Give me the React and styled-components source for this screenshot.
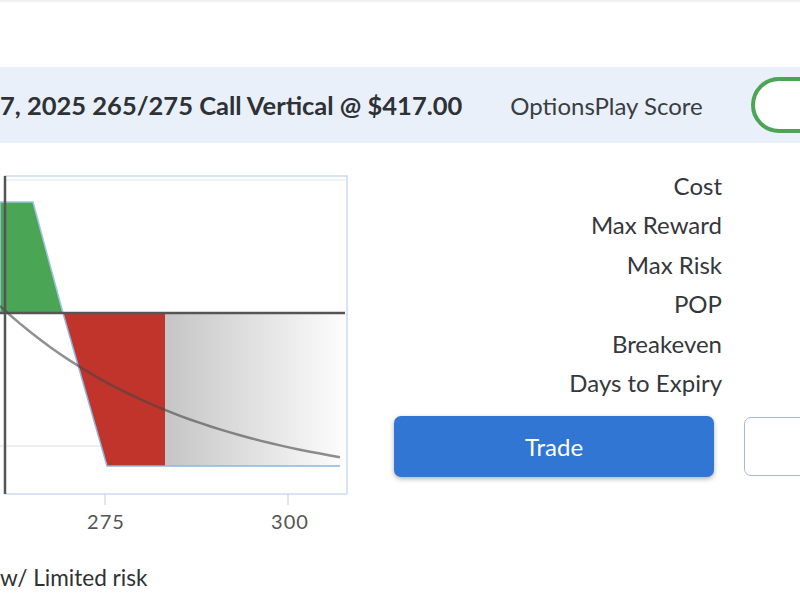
import React from 'react';
import styled, { createGlobalStyle } from 'styled-components';

const GlobalStyle = createGlobalStyle`
  html, body {
    margin: 0;
    padding: 0;
    background: #fff;
    overflow: hidden;
  }
  body {
    font-family: Lato, 'Open Sans', sans-serif;
    color: #2f3236;
  }
`;

const Page = styled.div`
  width: 800px;
  height: 600px;
  overflow: hidden;
`;

const TopEdge = styled.div`
  height: 3px;
  background: linear-gradient(#ededed, #fafafa);
`;

const Header = styled.div`
  margin-top: 64px;
  height: 76px;
  background: #e9f0fa;
  display: flex;
  align-items: center;
  gap: 48px;
  white-space: nowrap;
`;

const Title = styled.div`
  font-size: 25.5px;
  font-weight: 700;
  color: #2e3135;
`;

const ScoreLabel = styled.div`
  font-size: 24px;
  color: #3a3d42;
`;

const ScorePill = styled.div`
  flex-shrink: 0;
  width: 220px;
  height: 48px;
  border: 4px solid #4ba555;
  border-radius: 30px;
  background: #fff;
`;

const Body = styled.div`
  display: flex;
  align-items: flex-start;
`;

const ChartColumn = styled.div`
  width: 394px;
  flex-shrink: 0;
  padding-top: 27px;
`;

const Chart = styled.svg`
  display: block;
`;

const RiskNote = styled.div`
  margin-top: 24px;
  font-size: 22.6px;
  color: #2e3135;
`;

const Stats = styled.div`
  padding-top: 23px;
  flex-shrink: 0;
`;

const StatGrid = styled.div`
  display: grid;
  grid-template-columns: 328px 200px;
  font-size: 24px;
  line-height: 39.4px;
  color: #34373b;
`;

const StatLabel = styled.div`
  text-align: right;
`;

const StatValue = styled.div`
  padding-left: 24px;
`;

const Actions = styled.div`
  display: flex;
  align-items: center;
  gap: 30px;
  margin-top: 14px;
`;

const TradeButton = styled.button`
  width: 320px;
  height: 61px;
  border: none;
  border-radius: 7px;
  background: #3176d2;
  color: #fff;
  font-family: Lato, sans-serif;
  font-size: 24px;
  box-shadow: 0 2px 5px rgba(0, 0, 0, 0.3);
  flex-shrink: 0;
`;

const GhostButton = styled.button`
  width: 320px;
  height: 59px;
  border: 1.5px solid #aab6dc;
  border-radius: 7px;
  background: #fff;
  flex-shrink: 0;
`;

const stats = ['Cost', 'Max Reward', 'Max Risk', 'POP', 'Breakeven', 'Days to Expiry'];

// probability curve, page coords shifted by the chart's top (170)
const curve = () => {
  const pts = [];
  for (let x = 0; x <= 340; x += 10) {
    const y = 306 + 185 * (1 - Math.exp(-x / 200)) - 170;
    pts.push(`${x},${y.toFixed(1)}`);
  }
  return pts.join(' ');
};

const PayoffChart = () => (
  <Chart width="360" height="370" viewBox="0 0 360 370">
    <defs>
      <linearGradient id="loss" x1="0" x2="1" y1="0" y2="0">
        <stop offset="0" stopColor="#c5c5c5" />
        <stop offset="1" stopColor="#fdfdfd" />
      </linearGradient>
    </defs>
    <rect x="5" y="6" width="342" height="318" fill="#fff" stroke="#c9dcef" strokeWidth="1.5" />
    <line x1="5" y1="10" x2="345" y2="10" stroke="#e4e4e4" strokeWidth="1" />
    <line x1="0" y1="276" x2="345" y2="276" stroke="#dedede" strokeWidth="1" />
    <polygon points="0,32 33,32 63,143 0,143" fill="#4aa654" stroke="#9fc3e3" strokeWidth="1.5" />
    <rect x="165" y="143" width="180" height="153" fill="url(#loss)" />
    <polygon points="63,143 165,143 165,296 107,296" fill="#c0342b" />
    <polyline points="63,143 107,296 340,296" fill="none" stroke="#8fb5df" strokeWidth="1.5" />
    <line x1="0" y1="143" x2="345" y2="143" stroke="#555" strokeWidth="2.5" />
    <polyline points={curve()} fill="none" stroke="rgba(70,70,70,0.6)" strokeWidth="2.5" />
    <line x1="5" y1="6" x2="5" y2="324" stroke="#555" strokeWidth="2.5" />
    <line x1="105" y1="324" x2="105" y2="335" stroke="#ccc" strokeWidth="1" />
    <line x1="288" y1="324" x2="288" y2="335" stroke="#ccc" strokeWidth="1" />
    <text x="106" y="359" textAnchor="middle" fontFamily="Lato, sans-serif" fontSize="20" fill="#555" letterSpacing="1">275</text>
    <text x="290" y="359" textAnchor="middle" fontFamily="Lato, sans-serif" fontSize="20" fill="#555" letterSpacing="1">300</text>
  </Chart>
);

export default function App() {
  return (
    <Page>
      <GlobalStyle />
      <TopEdge />
      <Header>
        <Title>7, 2025 265/275 Call Vertical @ $417.00</Title>
        <ScoreLabel>OptionsPlay Score</ScoreLabel>
        <ScorePill />
      </Header>
      <Body>
        <ChartColumn>
          <PayoffChart />
          <RiskNote>w/ Limited risk</RiskNote>
        </ChartColumn>
        <Stats>
          <StatGrid>
            {stats.map((s) => (
              <React.Fragment key={s}>
                <StatLabel>{s}</StatLabel>
                <StatValue />
              </React.Fragment>
            ))}
          </StatGrid>
          <Actions>
            <TradeButton>Trade</TradeButton>
            <GhostButton />
          </Actions>
        </Stats>
      </Body>
    </Page>
  );
}
